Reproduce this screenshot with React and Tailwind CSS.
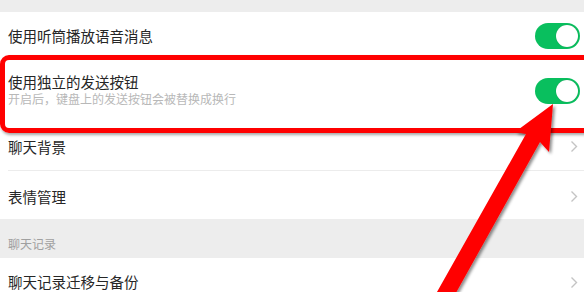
import React from 'react';

// 聊天设置页截图：开关行 + 箭头行，外加红框和红色箭头标注
const font = { fontFamily: '"Noto Sans CJK SC", "Noto Sans", sans-serif' };

function Toggle() {
  return (
    <div className="w-[45px] h-[26px] rounded-full bg-[#09bf5e] flex items-center justify-end pr-[2px]">
      <div className="w-[22px] h-[22px] rounded-full bg-white shadow-[0_0_1px_rgba(0,0,0,0.3)]" />
    </div>
  );
}

function Chevron() {
  return (
    <svg width="8" height="13" viewBox="0 0 8 13" className="mr-[6px]">
      <polyline points="1.5,1.5 6.5,6.5 1.5,11.5" fill="none" stroke="#c4c4c4" strokeWidth="1.4" />
    </svg>
  );
}

export default function App() {
  return (
    <div className="relative w-[584px] h-[292px] overflow-hidden bg-white text-[#262626]" style={font}>
      <div className="h-[12px] bg-[#ededed]" />

      {/* 听筒播放 */}
      <div className="h-[48px] pl-2 pr-[4px] flex items-center justify-between">
        <span className="text-[14.5px] leading-[18px]">使用听筒播放语音消息</span>
        <Toggle />
      </div>

      {/* 独立发送按钮 */}
      <div className="h-[63px] pl-2 pr-[4px] flex items-start justify-between">
        <div className="flex flex-col pt-[13px]">
          <span className="text-[14.5px] leading-[18px]">使用独立的发送按钮</span>
          <span className="text-[12px] leading-[15px] text-[#b8b8b8]">开启后，键盘上的发送按钮会被替换成换行</span>
        </div>
        <div className="pt-[18px]">
          <Toggle />
        </div>
      </div>

      <div className="pl-2">
        <div className="h-[48px] flex items-center justify-between border-b border-[#ececec]">
          <span className="text-[14.5px] leading-[18px]">聊天背景</span>
          <Chevron />
        </div>
      </div>

      <div className="h-[48px] pl-2 flex items-center justify-between pt-[3px]">
        <span className="text-[14.5px] leading-[18px]">表情管理</span>
        <Chevron />
      </div>

      <div className="h-[39px] bg-[#ededed] pl-2 pt-[17px]">
        <span className="text-[12px] leading-[15px] text-[#a0a0a0] block">聊天记录</span>
      </div>

      <div className="h-[48px] pl-2 flex items-center justify-between">
        <span className="text-[14.5px] leading-[18px]">聊天记录迁移与备份</span>
        <Chevron />
      </div>

      {/* 红框标注（右侧超出画面） */}
      <div className="absolute left-0 top-[55px] w-[600px] h-[78px] border-[5px] border-[#ff0000] rounded-[9px] shadow-[1px_2px_3px_rgba(0,0,0,0.35)]" />

      {/* 红色箭头 */}
      <svg className="absolute left-0 top-0" width="584" height="292" viewBox="0 0 584 292">
        <defs>
          <filter id="sh" x="-20%" y="-20%" width="140%" height="140%">
            <feDropShadow dx="2" dy="2" stdDeviation="1.5" floodColor="#000" floodOpacity="0.45" />
          </filter>
        </defs>
        <polygon
          points="553,104 549,152 540,142 452,300 437,292 526,134 515,132"
          fill="#ff0000"
          filter="url(#sh)"
        />
      </svg>
    </div>
  );
}
